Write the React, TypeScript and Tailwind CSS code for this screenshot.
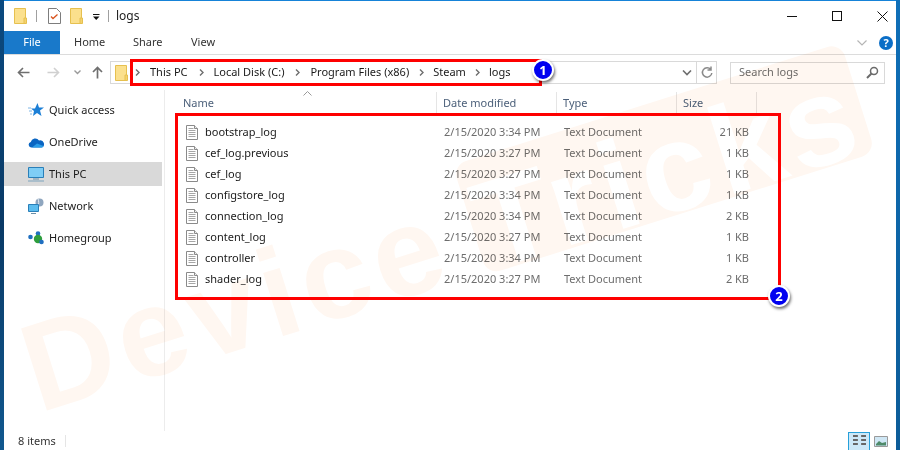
const files = [
  ["bootstrap_log", "2/15/2020 3:34 PM", "21 KB"],
  ["cef_log.previous", "2/15/2020 3:27 PM", "1 KB"],
  ["cef_log", "2/15/2020 3:27 PM", "1 KB"],
  ["configstore_log", "2/15/2020 3:34 PM", "1 KB"],
  ["connection_log", "2/15/2020 3:34 PM", "2 KB"],
  ["content_log", "2/15/2020 3:27 PM", "1 KB"],
  ["controller", "2/15/2020 3:34 PM", "1 KB"],
  ["shader_log", "2/15/2020 3:27 PM", "2 KB"],
];
const crumbs = [
  ["This PC", "ml-[10px] mr-[11px]"],
  ["Local Disk (C:)", "ml-[10px] mr-[11px]"],
  ["Program Files (x86)", "ml-[10px] mr-[10px]"],
  ["Steam", "ml-[9px] mr-[9px]"],
  ["logs", "ml-[9px] mr-[9px]"],
];

function Folder({ className = "" }: { className?: string }) {
  return (
    <svg width="13" height="16" viewBox="0 0 13 16" className={className}>
      <path d="M.5.5h11v15H.5z" fill="#fbe08d" stroke="#e6c04f" />
      <path d="M10 10h2.500v5.500H10z" fill="#f4d36f" stroke="#e6c04f" />
    </svg>
  );
}
function Doc() {
  return (
    <svg width="12" height="15" viewBox="0 0 12 15" className="shrink-0">
      <path d="M.5.5h8l3 3v11H.5z" fill="#fff" stroke="#8a8a8a" />
      <path d="M8.500.5v3h3" fill="#eee" stroke="#8a8a8a" />
      <path d="M2.500 3.500h5M2.500 5.500h7M2.500 7.500h7M2.500 9.500h7M2.500 11.500h7" stroke="#a6a6a6" />
    </svg>
  );
}
function Chev() {
  return (
    <svg width="5" height="7" viewBox="0 0 5 7" className="shrink-0">
      <path d="M1 .5 4 3.500 1 6.500" fill="none" stroke="#6e6e6e" strokeWidth="1.400" />
    </svg>
  );
}
function Side({ icon, label, active }: { icon: React.ReactNode; label: string; active?: boolean }) {
  return (
    <div className={`h-6 flex items-center mt-2 pl-6 mr-[2px] ${active ? "bg-[#d9d9d9]" : ""}`}>
      <span className="w-[21px] h-6 flex items-center justify-start shrink-0">{icon}</span>
      <span className="text-[#1c1c1c]">{label}</span>
    </div>
  );
}
function Badge({ n, className }: { n: number; className: string }) {
  return (
    <div className={`absolute w-[22px] h-[22px] rounded-full bg-[#0000f0] border-2 border-white shadow-[1px_2px_3px_rgba(0,0,0,0.55)] text-white text-[13px] font-bold flex items-center justify-center leading-none ${className}`}>
      {n}
    </div>
  );
}

export default function App() {
  return (
    <div className="relative w-[900px] h-[450px] overflow-hidden flex bg-white text-[11px] text-[#1a1a1a] [font-family:'Noto_Sans','Open_Sans',sans-serif]">
      <div className="w-1 bg-gradient-to-b from-[#0b4a80] via-[#0a3a66] to-[#11588f]" />
      <div className="flex-1 flex flex-col min-w-0 border-t border-[#1683d8]">
        {/* title bar */}
        <div className="h-[30px] flex items-center shrink-0">
          <Folder className="ml-[10px]" />
          <span className="w-px h-[12px] bg-[#a0a0a0] ml-[9px]" />
          <svg width="13" height="16" viewBox="0 0 13 16" className="ml-[11px]">
            <path d="M.5.5h8l4 4v11H.5z" fill="#fff" stroke="#7d7d7d" />
            <path d="M3 8.500l2 2 4.500-4" fill="none" stroke="#d9541e" strokeWidth="1.300" />
          </svg>
          <Folder className="ml-[9px]" />
          <svg width="7" height="7" viewBox="0 0 7 7" className="ml-[10px] mt-[2px]">
            <path d="M0 0h6.500v1H0zM0 2.500h6.500L3.200 6z" fill="#111" />
          </svg>
          <span className="w-px h-[12px] bg-[#a0a0a0] ml-[8px]" />
          <span className="ml-[7px] text-[12px] text-[#222]">logs</span>
          <div className="ml-auto flex items-center pr-[8px]">
            <span className="w-[10px] h-px bg-[#111]" />
            <span className="w-[10px] h-[10px] border border-[#111] ml-[35px]" />
            <svg width="11" height="11" viewBox="0 0 11 11" className="ml-[35px]">
              <path d="M.5.5l10 10M10.500.5l-10 10" stroke="#111" strokeWidth="1" />
            </svg>
          </div>
        </div>
        {/* ribbon tabs */}
        <div className="h-[24px] flex items-stretch shrink-0 border-b border-[#dcdcdc]">
          <div className="w-14 bg-[#1979ca] text-white flex items-center justify-center">File</div>
          <div className="flex items-center text-[#333] pl-[14px] w-[73px]">Home</div>
          <div className="flex items-center text-[#333] w-[58px]">Share</div>
          <div className="flex items-center text-[#333]">View</div>
          <div className="ml-auto flex items-center pr-[3px]">
            <svg width="10" height="6" viewBox="0 0 10 6"><path d="M.5.5 5 5 9.500.5" fill="none" stroke="#b5b5b5" strokeWidth="1.200" /></svg>
            <span className="w-[14px] h-[14px] rounded-full bg-[#0a6ec7] text-white text-[11px] font-bold flex items-center justify-center ml-[12px] leading-none">?</span>
          </div>
        </div>
        {/* address row */}
        <div className="h-[35px] flex items-center shrink-0">
          <svg width="13" height="11" viewBox="0 0 13 11" className="ml-[13px]"><path d="M12.500 5.500H1.500M6 1 1.500 5.500 6 10" fill="none" stroke="#6f6f6f" strokeWidth="1.600" /></svg>
          <svg width="13" height="11" viewBox="0 0 13 11" className="ml-[17px]"><path d="M.5 5.500h11M7 1l4.500 4.500L7 10" fill="none" stroke="#d0d0d0" strokeWidth="1.600" /></svg>
          <svg width="7" height="5" viewBox="0 0 7 5" className="ml-[14px]"><path d="M.5.5 3.500 3.500 6.500.5" fill="none" stroke="#9a9a9a" strokeWidth="1.400" /></svg>
          <svg width="11" height="13" viewBox="0 0 11 13" className="ml-[11px]"><path d="M5.500 12.500v-11M1 6l4.500-4.500L10 6" fill="none" stroke="#6f6f6f" strokeWidth="1.700" /></svg>
          <div className="ml-[7px] w-[607px] h-[23px] border border-[#d9d9d9] flex items-center">
            <Folder className="ml-[4px] mr-[7px] shrink-0" />
            <Chev />
            {crumbs.map(([c, gap], i) => (
              <span key={c} className="flex items-center">
                <span className={`${gap} text-[#1a1a1a]`}>{c}</span>
                {i < crumbs.length - 1 && <Chev />}
              </span>
            ))}
            <svg width="10" height="6" viewBox="0 0 10 6" className="ml-auto mr-[4px]"><path d="M1 .5 5 4.500 9 .5" fill="none" stroke="#6f6f6f" strokeWidth="1.600" /></svg>
            <span className="h-full w-[20px] border-l border-[#d9d9d9] flex items-center justify-center">
              <svg width="12" height="13" viewBox="0 0 12 13"><path d="M9.800 3.500A4.700 4.700 0 1 0 10.800 7M10 .5v3.500H6.500" fill="none" stroke="#8a8a8a" strokeWidth="1.500" /></svg>
            </span>
          </div>
          <div className="ml-[13px] w-[155px] h-[22px] border border-[#d9d9d9] flex items-center pl-[8px] pr-[5px] text-[#6d6d6d]">
            Search logs
            <svg width="13" height="13" viewBox="0 0 13 13" className="ml-auto"><circle cx="8" cy="5" r="3.500" fill="none" stroke="#6a6a6a" strokeWidth="1.500" /><path d="M5.500 7.500 1 12" stroke="#6a6a6a" strokeWidth="2" /></svg>
          </div>
        </div>
        {/* body */}
        <div className="flex-1 flex min-h-0">
          <div className="w-[161px] border-r border-[#ececec] shrink-0 mb-[1px]">
            <Side label="Quick access" icon={
              <svg width="16" height="14" viewBox="0 0 16 14"><path d="M9.500 0l1.500 4.500h5L12 7.500l1.500 5.500-4.500-3-4 3 1-5L3 5.500h4z" fill="#1c7fd6" /><path d="M0 5h3M1 8h3M2 11h2" stroke="#7fb6e6" /></svg>
            } />
            <Side label="OneDrive" icon={
              <svg width="16" height="11" viewBox="0 0 16 11"><path d="M3 10.500A2.800 2.800 0 0 1 2.800 5 4.500 4.500 0 0 1 11 3.500 3.500 3.500 0 0 1 13.500 10.500z" fill="#0a65c2" /><path d="M4 10.500 9 6.500l6.500 2.500c-.5 1-1 1.500-2 1.500z" fill="#2b9de8" /></svg>
            } />
            <Side active label="This PC" icon={
              <svg width="16" height="15" viewBox="0 0 16 15"><path d="M.5.5h15v10H.5z" fill="#7fcdf5" stroke="#2a7fb8" /><path d="M5 12h6" stroke="#6a8fa8" /><path d="M0 14h16" stroke="#9ab4c6" strokeWidth="1.500" /></svg>
            } />
            <Side label="Network" icon={
              <svg width="16" height="16" viewBox="0 0 16 16"><circle cx="11.500" cy="4.500" r="4" fill="#8fa6bf" /><path d="M10 1c1 2 1 5 0 7" stroke="#e6eef5" fill="none" /><path d="M.5 6.500h10v7H.5z" fill="#5bbcee" stroke="#2a7fb8" /><path d="M3 15.500h5" stroke="#6a8fa8" /></svg>
            } />
            <Side label="Homegroup" icon={
              <svg width="16" height="14" viewBox="0 0 16 14"><circle cx="2.500" cy="6" r="2.300" fill="#1f6fc0" /><circle cx="10" cy="2.500" r="2.300" fill="#1f6fc0" /><circle cx="10" cy="8" r="4.200" fill="#2e9e3e" /><circle cx="13.500" cy="11" r="2.300" fill="#1f6fc0" /></svg>
            } />
          </div>
          <div className="flex-1 min-w-0">
            <div className="h-[25px] grid grid-cols-[272px_120px_120px_80px] text-[#4c607a] relative pt-[2px]">
              <div className="border-r border-[#e5e5e5] pl-[18px] flex items-center relative">Name
                <svg width="9" height="5" viewBox="0 0 9 5" className="absolute left-[138px] top-[-1px]"><path d="M.5 4.500 4.500.5l4 4" fill="none" stroke="#9a9a9a" /></svg>
              </div>
              <div className="border-r border-[#e5e5e5] pl-[6px] flex items-center">Date modified</div>
              <div className="border-r border-[#e5e5e5] pl-[6px] flex items-center">Type</div>
              <div className="border-r border-[#e5e5e5] pl-[6px] flex items-center">Size</div>
            </div>
            <div className="pt-[7px]">
              {files.map(([name, date, size]) => (
                <div key={name} className="h-[21px] grid grid-cols-[272px_120px_120px_80px] items-center text-[#6d6d6d]">
                  <div className="pl-[21px] flex items-center gap-[7px] text-[#1a1a1a]"><Doc />{name}</div>
                  <div className="pl-[7px]">{date}</div>
                  <div className="pl-[7px]">Text Document</div>
                  <div className="text-right pr-[8px]">{size}</div>
                </div>
              ))}
            </div>
          </div>
        </div>
        {/* status */}
        <div className="h-[18px] flex items-center shrink-0 relative">
          <span className="ml-[14px] text-[#333]">8 items</span>
          <span className="w-px h-[12px] bg-[#e5e5e5] ml-[9px]" />
          <div className="ml-auto flex items-center pr-[8px]">
            <span className="w-[22px] h-[18px] bg-[#cce8f8] border border-[#26a0da] border-b-0 flex flex-col gap-[2px] pt-[2px] pl-[4px]">
              <span className="block h-[2px] w-[13px] border-t-2 border-dashed border-[#666]" />
              <span className="block h-[2px] w-[13px] border-t-2 border-dashed border-[#666]" />
              <span className="block h-[2px] w-[13px] border-t-2 border-dashed border-[#666]" />
            </span>
            <svg width="14" height="11" viewBox="0 0 14 11" className="ml-[4px]"><path d="M.5.5h13v10H.5z" fill="#cfe7f5" stroke="#9a9a9a" /><path d="M2 8l3-3 3 2 4-1v3.500H2z" fill="#4f8a6a" /></svg>
          </div>
        </div>
      </div>
      <div className="w-1 bg-gradient-to-b from-[#0f6fb8] to-[#0c5c98]" />

      {/* watermark */}
      <div className="absolute left-[39px] top-[301px] -rotate-[17.5deg] origin-[0_112px] pointer-events-none mix-blend-multiply flex items-baseline text-[#fff7f1] text-[125px] font-bold tracking-[6px] leading-none whitespace-nowrap [font-family:'Liberation_Sans',sans-serif]">
        <span>Device</span>
        <span className="ml-[30px] w-[407px] h-[115px] rounded-[14px] bg-[#fff7f1] text-white pt-[11px] leading-[115px] text-center">Tricks</span>
      </div>
      {/* annotations */}
      <div className="absolute left-[130px] top-[59px] w-[412px] h-[27px] border-[3px] border-[#fe0000]" />
      <Badge n={1} className="left-[532px] top-[59px]" />
      <div className="absolute left-[175px] top-[113px] w-[606px] h-[187px] border-[3px] border-[#fe0000]" />
      <Badge n={2} className="left-[768px] top-[285px]" />
    </div>
  );
}
